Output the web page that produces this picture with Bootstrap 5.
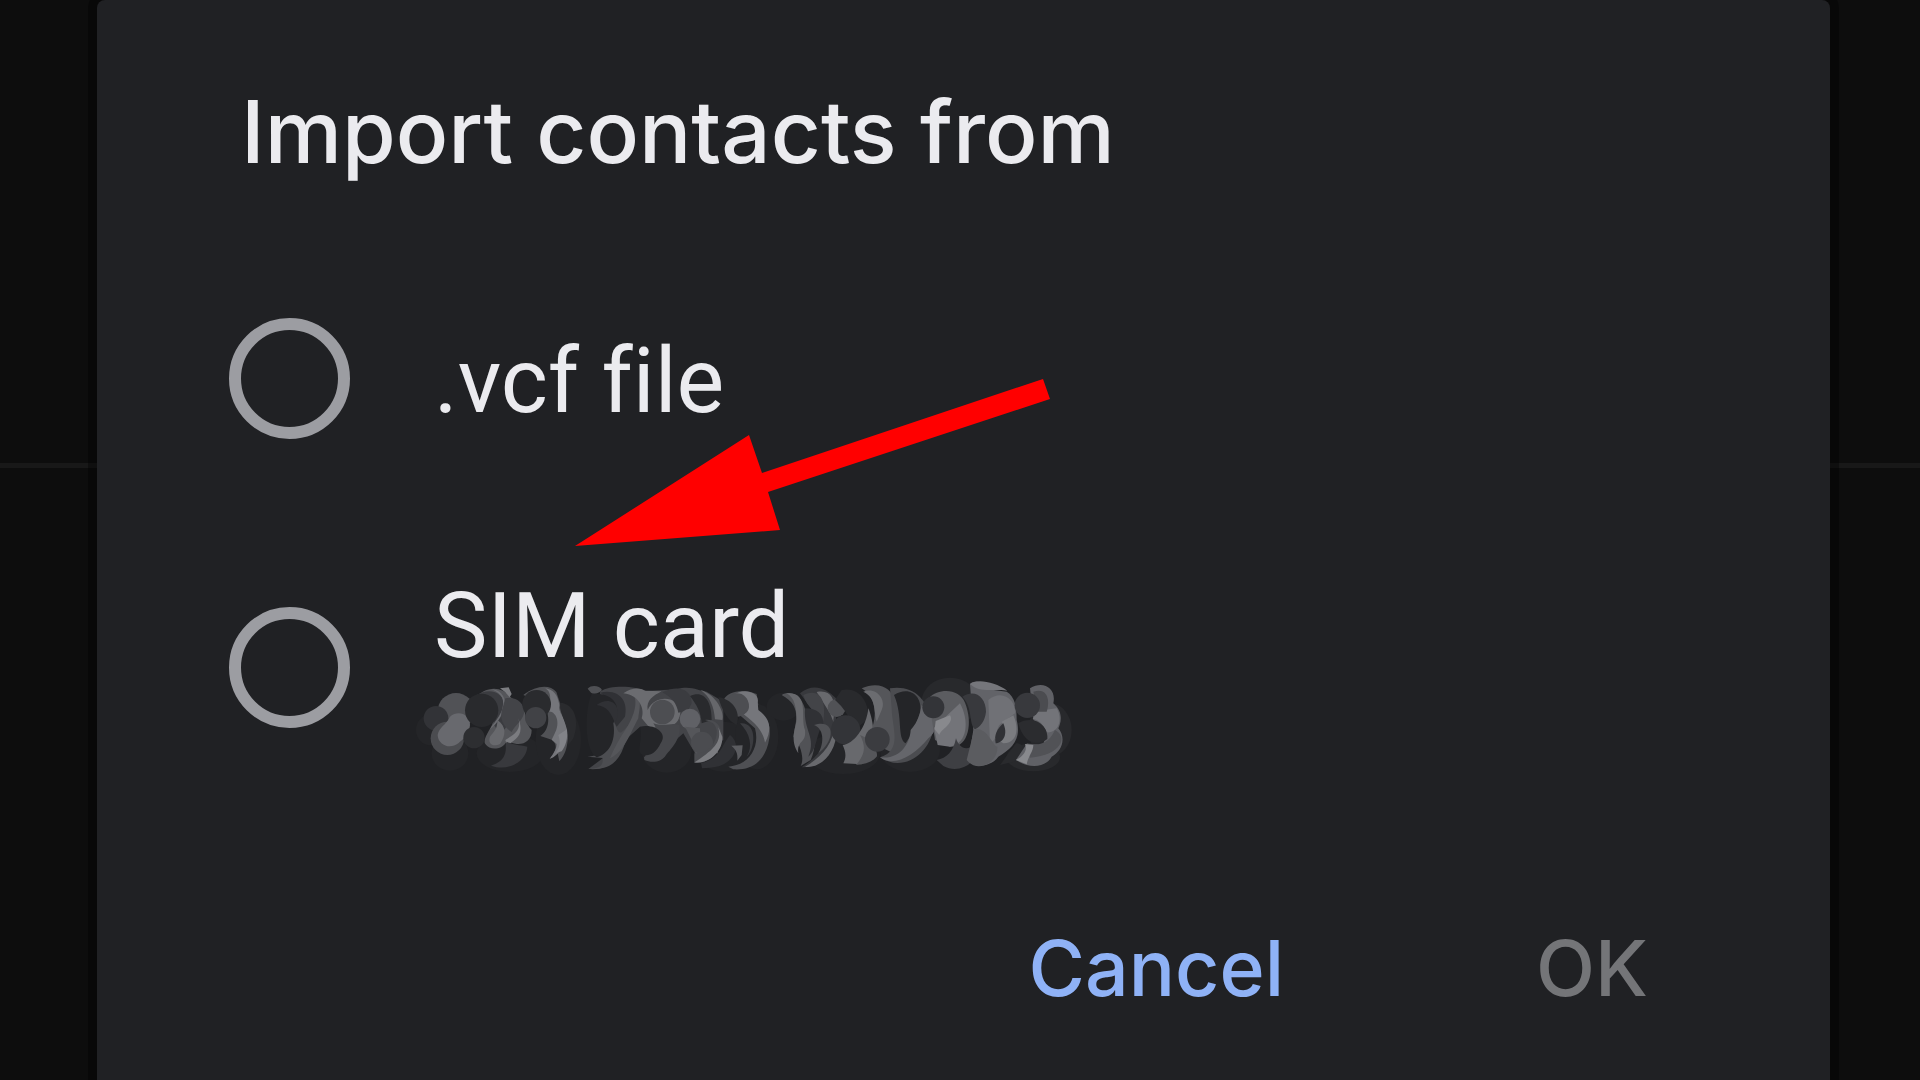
<!DOCTYPE html>
<html lang="en">
<head>
<meta charset="utf-8">
<meta name="viewport" content="width=device-width, initial-scale=1">
<title>Import contacts</title>
<link href="https://cdn.jsdelivr.net/npm/bootstrap@5.3.0/dist/css/bootstrap.min.css" rel="stylesheet">
<style>
  body {
    background: linear-gradient(#0d0d0d 463px, #181818 463px, #181818 468px, #0d0d0d 468px);
    font-family: Roboto, "Noto Sans", sans-serif;
    font-variant-ligatures: none;
    color: #ebebef;
  }
  .backdrop { padding: 0 90px 0 97px; overflow: hidden; }
  .dialog {
    background: #202124;
    border-radius: 8px 8px 0 0;
    box-shadow: 0 0 0 9px rgba(0, 0, 0, .35);
    padding: 80px 132px 64px;
  }
  .dialog-title, .actions .btn { font-family: Inter, Roboto, sans-serif; font-weight: 500; }
  .dialog-title { font-size: 87px; line-height: 104px; padding-left: 12px; }
  .options { margin-top: 134px; }
  .option-row + .option-row { margin-top: 136px; }
  .option-row .form-check-input {
    width: 121px; height: 121px; margin: 0;
    background: transparent; border: 12px solid #9c9da2;
  }
  .option-row .form-check-input:checked { border-color: #8ab4f8; }
  .option-label { font-size: 90px; line-height: 104px; margin-left: 84px; }
  .first-label { padding-top: 12px; }
  .second-radio { padding-top: 32px; }
  .scribble { width: 656px; height: 101px; overflow: visible; }
  .arrow { left: 346px; top: 61px; width: 475px; height: 167px; }
  .actions { margin-top: 142px; padding-right: 50px; gap: 252px; }
  .actions .btn { font-size: 77px; line-height: 92px; }
  .cancel-btn, .cancel-btn:hover { color: #8fb2f6; }
  .ok-btn:disabled { color: #747578; opacity: 1; border-color: transparent; }
</style>
</head>
<body>
<main class="backdrop min-vh-100 d-flex">
  <form class="dialog flex-grow-1" aria-labelledby="dialog-title">
    <h1 class="dialog-title mb-0" id="dialog-title">Import contacts from</h1>

    <div class="options position-relative" role="radiogroup" aria-labelledby="dialog-title">
      <div class="option-row d-flex align-items-start">
        <input class="form-check-input flex-shrink-0" type="radio" name="source" id="source-vcf">
        <label class="option-label first-label" for="source-vcf">.vcf file</label>
      </div>
      <div class="option-row d-flex align-items-start">
        <div class="second-radio d-flex flex-shrink-0">
          <input class="form-check-input" type="radio" name="source" id="source-sim">
        </div>
        <label class="option-label d-flex flex-column" for="source-sim">
          <span>SIM card</span>
          <!-- brushed-out phone number -->
          <svg class="scribble" viewBox="72 27 1968 303" aria-hidden="true">
            <g fill="#242528">
              <ellipse cx="60" cy="180" rx="42" ry="46"/><ellipse cx="120" cy="250" rx="55" ry="52"/>
              <ellipse cx="300" cy="250" rx="100" ry="56"/><ellipse cx="445" cy="210" rx="68" ry="105"/>
              <ellipse cx="770" cy="240" rx="75" ry="68"/><ellipse cx="940" cy="230" rx="90" ry="75"/>
              <ellipse cx="1040" cy="200" rx="65" ry="98"/><ellipse cx="1120" cy="110" rx="50" ry="42"/>
              <ellipse cx="1300" cy="250" rx="110" ry="62"/><ellipse cx="1500" cy="240" rx="90" ry="66"/>
            </g>
            <g fill="#28292c">
              <ellipse cx="1620" cy="95" rx="85" ry="72"/><ellipse cx="1920" cy="180" rx="65" ry="80"/>
              <ellipse cx="1870" cy="262" rx="80" ry="42"/>
            </g>
            <!-- first cluster -->
            <circle cx="138" cy="124" r="55" fill="#515256"/>
            <circle cx="78" cy="145" r="37" fill="#323337"/>
            <circle cx="112" cy="205" r="50" fill="#4b4c50"/>
            <path d="M120 140C145 119 180 133 180 165C178 195 160 206 145 220C120 240 84 225 83 195C87 170 108 166 120 140Z" fill="#68696e"/>
            <circle cx="192" cy="203" r="32" fill="#2d2e31"/>
            <path d="M192 90C220 48 275 45 300 80L340 110C350 140 345 160 365 180C365 210 345 224 320 222L290 215C275 240 240 242 226 222C215 205 250 170 250 150Z" fill="#55565a"/>
            <path d="M270 55L296 52L305 72L299 82L285 66Z" fill="#7b7c80"/>
            <path d="M200 75C235 52 285 63 285 115C288 160 300 175 270 185C250 170 245 155 252 130Z" fill="#3b3c40"/>
            <path d="M245 58C278 72 285 90 276 120C266 145 250 160 240 178C265 158 280 130 286 105C285 75 268 60 245 58Z" fill="#6a6b70"/>
            <circle cx="215" cy="121" r="50" fill="#292a2d"/>
            <path d="M262 150C290 170 288 195 270 222C250 232 232 222 240 200C250 186 263 178 262 150Z" fill="#68696d"/>
            <path d="M286 85C320 78 345 100 342 130C336 155 315 165 305 186C280 170 268 145 276 120Z" fill="#434448"/>
            <path d="M325 145C335 178 315 192 286 210L292 228C305 210 348 205 325 145Z" fill="#7b7c80"/>
            <path d="M287 225C290 253 280 275 243 287C300 307 350 270 352 230C324 225 307 224 290 215Z" fill="#38393d"/>
            <path d="M340 75C380 45 420 43 439 66L452 105C445 125 475 155 474 205C470 235 468 250 448 274L443 250L420 268C430 248 450 230 425 209L391 198C420 180 422 135 400 100Z" fill="#515256"/>
            <path d="M402 54C430 61 420 105 414 125C435 120 455 155 433 193L425 209L440 222C440 240 425 258 419 266C440 263 470 225 472 180C467 145 442 125 448 105C443 75 432 58 402 54Z" fill="#75767b"/>
            <path d="M445 195C454 220 447 235 437 249L455 244C467 228 474 208 471 178Z" fill="#828388"/>
            <circle cx="380" cy="103" r="43" fill="#2a2b2e"/>
            <circle cx="377" cy="143" r="32" fill="#414246"/>
            <path d="M450 98C492 100 511 150 490 205L475 225C480 170 450 140 450 98Z" fill="#2a2b2e"/>
            <!-- second cluster -->
            <path d="M533 56C545 43 570 48 576 60C565 72 550 74 543 68Z" fill="#4f5054"/>
            <path d="M570 65C605 42 680 50 708 63L800 58C840 45 865 62 890 65L940 95L940 210L855 250L820 190L780 225L752 255L703 262L735 210L690 170L640 215C625 275 600 300 535 297L582 262Z" fill="#434448"/>
            <path d="M535 297C570 295 580 288 578 264L532 260C575 260 600 230 605 145C630 185 620 210 660 160C640 245 630 303 535 297Z" fill="#4c4d51"/>
            <path d="M655 70C690 70 675 130 660 155C645 185 625 205 600 265C643 245 659 193 685 145C690 105 700 80 655 70Z" fill="#55565a"/>
            <path d="M570 68C630 55 655 95 645 140L620 170C600 135 625 100 570 68Z" fill="#303135"/>
            <path d="M545 72C610 65 640 110 610 160C620 220 590 255 560 262C520 240 525 110 545 72Z" fill="#242528"/>
            <path d="M560 105C600 75 642 105 615 160C605 130 590 108 560 105Z" fill="#303135"/>
            <path d="M705 62L755 64C730 77 708 90 713 120C735 70 805 80 811 120C812 150 795 168 780 165L720 175L695 145C705 120 690 75 640 70C670 50 690 55 705 62Z" fill="#6b6c70"/>
            <circle cx="757" cy="126" r="37" fill="#4d4e52"/>
            <path d="M730 160C765 172 785 155 808 165C815 205 785 235 768 255C755 277 725 280 703 270L702 261C735 255 762 210 730 160Z" fill="#46474b"/>
            <path d="M690 170C735 160 775 190 752 220C738 250 720 258 700 255C675 248 700 210 690 170Z" fill="#242528"/>
            <path d="M757 67C800 45 845 54 845 100L835 120L805 128C800 100 785 82 757 67Z" fill="#3b3c40"/>
            <circle cx="840" cy="147" r="31" fill="#606166"/>
            <path d="M825 170L870 175C870 220 885 245 920 235L925 250L856 252L855 230Z" fill="#55565a"/>
            <circle cx="876" cy="218" r="33" fill="#4b4c50"/>
            <path d="M840 78C880 60 905 90 905 150L875 160C873 125 860 105 840 78Z" fill="#292a2d"/>
            <path d="M872 60C920 75 945 130 937 150L915 148C912 110 900 80 872 60Z" fill="#66676b"/>
            <path d="M885 150C930 145 945 190 930 232C915 260 890 282 853 279L853 250C890 253 923 223 920 180C915 160 905 155 885 150Z" fill="#4b4c50"/>
            <path d="M925 172C935 215 917 235 854 277C900 283 940 240 937 200Z" fill="#7b7c80"/>
            <path d="M873 279C932 267 935 225 960 195C1000 225 970 290 900 293L876 295Z" fill="#303135"/>
            <path d="M964 227L998 226L995 255L982 272C984 248 978 240 964 227Z" fill="#5b5c60"/>
            <path d="M942 88C950 68 995 52 1040 72L1045 105L1025 120C1070 130 1085 165 1078 205C1068 270 1030 302 970 298L955 290C1020 285 1050 230 1035 175L995 140Z" fill="#4f5054"/>
            <path d="M970 76C1000 52 1050 67 1043 97L1045 120C1080 145 1088 175 1065 218C1060 190 1045 165 1000 132C1025 125 1028 80 970 76Z" fill="#75767b"/>
            <circle cx="981" cy="105" r="35" fill="#4d4e52"/>
            <path d="M925 82C960 85 995 120 980 165C955 155 935 120 925 82Z" fill="#292a2d"/>
            <path d="M990 160C1045 155 1035 240 1010 260C1030 230 1020 190 990 160Z" fill="#3b3c40"/>
            <!-- third cluster -->
            <path d="M1115 75C1150 55 1190 90 1188 145C1220 180 1220 230 1202 270L1172 288C1185 265 1170 220 1150 200C1155 160 1180 110 1115 75Z" fill="#515256"/>
            <path d="M1130 70C1200 65 1170 140 1185 180C1190 220 1160 210 1165 250C1140 210 1155 180 1160 150C1158 110 1155 85 1130 70Z" fill="#68696d"/>
            <path d="M1170 70C1205 40 1245 50 1278 85L1278 160C1285 235 1240 295 1175 292C1210 270 1255 230 1252 180Z" fill="#38393d"/>
            <path d="M1220 66C1280 55 1275 115 1270 150C1280 210 1240 260 1185 290C1230 297 1280 250 1280 180L1260 130Z" fill="#68696d"/>
            <path d="M1180 75C1230 52 1250 90 1240 155C1225 130 1190 115 1180 75Z" fill="#434448"/>
            <path d="M1185 115C1220 115 1242 130 1240 165C1220 180 1222 240 1195 260C1220 200 1180 185 1185 115Z" fill="#303135"/>
            <path d="M1212 165C1275 145 1278 210 1225 250C1245 215 1240 175 1212 165Z" fill="#515256"/>
            <circle cx="1280" cy="114" r="27" fill="#515256"/>
            <path d="M1295 60C1345 50 1375 90 1377 145L1345 170C1310 145 1315 125 1275 90Z" fill="#292a2d"/>
            <circle cx="1307" cy="180" r="44" fill="#333438"/>
            <path d="M1300 280C1310 260 1307 245 1298 225C1330 225 1370 170 1375 115C1390 150 1400 215 1375 250L1355 283Z" fill="#68696d"/>
            <path d="M1350 195C1395 210 1405 255 1400 260C1385 278 1360 283 1338 285C1360 258 1372 235 1350 195Z" fill="#55565a"/>
            <path d="M1355 55C1410 30 1450 60 1450 90C1480 130 1470 225 1450 250L1370 210C1400 160 1410 90 1355 55Z" fill="#55565a"/>
            <path d="M1360 65C1400 50 1430 90 1415 120L1400 155C1390 120 1400 85 1360 65Z" fill="#6b6c70"/>
            <circle cx="1402" cy="208" r="37" fill="#3b3c40"/>
            <path d="M1440 55C1500 45 1555 75 1570 175C1560 250 1480 310 1410 262C1480 240 1445 170 1445 115Z" fill="#4b4c50"/>
            <path d="M1452 75C1500 45 1540 80 1530 130C1515 170 1505 195 1487 220C1460 205 1480 140 1452 75Z" fill="#242528"/>
            <path d="M1535 105C1575 140 1590 180 1555 205C1515 255 1450 295 1410 262C1470 270 1500 220 1502 180C1525 155 1530 130 1535 105Z" fill="#65666b"/>
            <path d="M1555 85C1590 50 1650 58 1665 98C1690 160 1675 235 1620 230L1575 210L1565 145Z" fill="#5b5c60"/>
            <path d="M1572 173L1650 100C1677 150 1675 220 1620 230L1583 225Z" fill="#737479"/>
            <path d="M1577 153L1620 136C1635 160 1590 180 1588 195L1574 178Z" fill="#88898d"/>
            <circle cx="1570" cy="112" r="33" fill="#333438"/>
            <path d="M1580 270C1610 265 1630 245 1638 205C1645 230 1670 250 1695 220C1715 275 1650 315 1600 288Z" fill="#3e3f43"/>
            <path d="M1680 42C1700 25 1725 40 1735 58L1790 65C1815 80 1820 110 1820 150C1835 210 1805 235 1765 260C1740 295 1690 292 1675 272L1690 180Z" fill="#626368"/>
            <path d="M1680 42C1700 25 1755 35 1792 62C1740 55 1710 70 1680 42Z" fill="#75767b"/>
            <path d="M1735 90C1775 55 1820 90 1815 130L1775 160C1755 170 1765 210 1740 220Z" fill="#707176"/>
            <path d="M1775 155L1810 136C1828 175 1822 220 1780 220L1755 205C1785 195 1787 175 1775 155Z" fill="#7b7c80"/>
            <path d="M1657 80C1695 55 1728 82 1728 125C1725 155 1710 170 1695 178C1675 160 1690 115 1657 80Z" fill="#38393d"/>
            <path d="M1693 178C1730 168 1750 230 1762 230C1765 280 1700 310 1670 270Z" fill="#5b5c60"/>
            <path d="M1780 160C1797 200 1773 220 1757 220C1752 195 1760 178 1780 160Z" fill="#303135"/>
            <path d="M1770 285L1818 220C1850 220 1845 260 1810 275Z" fill="#292a2d"/>
            <path d="M1860 55C1900 30 1940 55 1930 100C1965 130 1950 165 1945 175C1970 205 1955 245 1925 260C1905 295 1855 295 1818 270L1850 222L1900 225L1910 180L1870 150Z" fill="#606166"/>
            <path d="M1885 122L1940 115C1960 150 1945 190 1910 187C1900 165 1890 150 1868 146Z" fill="#737479"/>
            <path d="M1870 65C1915 50 1920 95 1910 125L1882 125Z" fill="#4b4c50"/>
            <circle cx="1852" cy="106" r="38" fill="#38393d"/>
            <path d="M1825 160C1865 135 1915 160 1912 207C1880 230 1840 220 1825 160Z" fill="#2b2c2f"/>
            <path d="M1850 220C1900 232 1920 210 1935 180C1975 200 1955 255 1860 263Z" fill="#515256"/>
            <path d="M1818 270C1850 253 1850 235 1845 222L1870 225C1870 245 1855 257 1850 283Z" fill="#88898d"/>
          </svg>
        </label>
      </div>
      <!-- arrow pointing at the SIM card option -->
      <svg class="arrow position-absolute pe-none" viewBox="0 0 475 167" aria-hidden="true">
        <path d="M0 167L174 56L187 94L468 0L475 20L193 113L205 151Z" fill="#f00"/>
      </svg>
    </div>

    <div class="actions d-flex justify-content-end">
      <button type="button" class="btn cancel-btn p-0 border-0">Cancel</button>
      <button type="submit" class="btn ok-btn p-0 border-0" disabled>OK</button>
    </div>
  </form>
</main>
<script src="https://cdn.jsdelivr.net/npm/bootstrap@5.3.0/dist/js/bootstrap.bundle.min.js"></script>
</body>
</html>
